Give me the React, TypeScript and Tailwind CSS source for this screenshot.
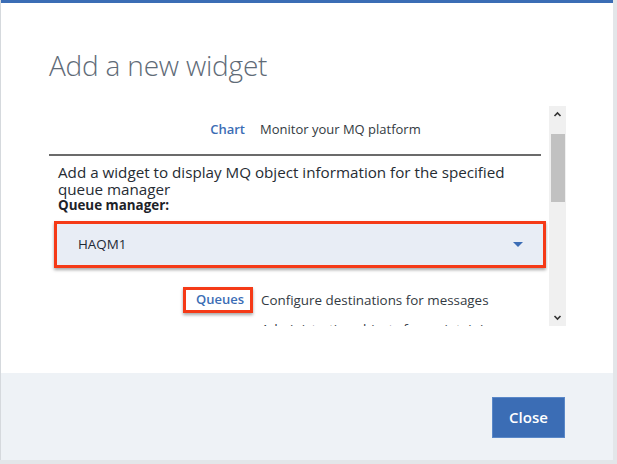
import React from "react";

const font = { fontFamily: '"Open Sans", "Liberation Sans", sans-serif' };

export default function App() {
  return (
    <div className="w-[617px] h-[464px] bg-[#e3e6e9] overflow-hidden" style={font}>
      <div className="w-[613px] h-[460px] flex flex-col bg-white border-l border-[#d5d9dd]">
        <div className="h-[3px] shrink-0 bg-[#3b6db5]" />
        <div className="h-[370px] shrink-0 flex flex-col pl-[48px]">
          <div className="pt-[42px] h-[103px] shrink-0 text-[28px] font-light text-[#5f6b77] leading-[40px] tracking-[-0.2px]">
            Add a new widget
          </div>
          <div className="flex h-[220px] shrink-0">
            <div className="w-[499px] h-[220px] overflow-hidden flex flex-col">
              <div className="flex items-center h-[48px] shrink-0 text-[13px]">
                <div className="w-[196px] text-right font-semibold text-[#3b6db5]">Chart</div>
                <div className="pl-[15px] text-[#333a42]">Monitor your MQ platform</div>
              </div>
              <div className="h-[2px] w-[492px] shrink-0 bg-[#6b6b6b]" />
              <div className="pl-[9px] pt-[8px] shrink-0 text-[15.2px] leading-[17px] text-[#262c33]">
                Add a widget to display MQ object information for the specified queue manager
              </div>
              <div className="pl-[9px] shrink-0 text-[13.4px] leading-[15px] font-bold text-[#1d2228]">Queue manager:</div>
              <div className="ml-[5px] mt-[8px] shrink-0 w-[492px] h-[47px] border-[3px] border-[#f53a17] shadow-[0_2px_3px_rgba(0,0,0,0.35)]">
                <div className="h-full bg-[#e8edf5] flex items-center justify-between pl-[21px] pr-[20px]">
                  <span className="text-[13.4px] text-[#1f2a36]">HAQM1</span>
                  <svg width="10" height="6" viewBox="0 0 10 6">
                    <path d="M0 0 L10 0 L5 5 Z" fill="#3b6db5" />
                  </svg>
                </div>
              </div>
              <div className="flex items-center mt-[19px] h-[26px] shrink-0">
                <div className="w-[134px]" />
                <div className="w-[70px] h-[26px] text-[13px] border-[3px] border-[#f53a17] shadow-[0_2px_3px_rgba(0,0,0,0.35)] flex items-center justify-end pr-[6px] font-semibold text-[#3b6db5] bg-white">
                  Queues
                </div>
                <div className="pl-[8px] text-[13.4px] text-[#333a42]">Configure destinations for messages</div>
              </div>
              <div className="flex mt-[6px] shrink-0 text-[13.4px] leading-[20px]">
                <div className="w-[212px]" />
                <div className="text-[#333a42]">Administrative objects for maintaining</div>
              </div>
            </div>
            <div className="ml-[1px] w-[17px] h-[220px] bg-[#f0f0f0] flex flex-col items-center">
              <div className="h-[17px] w-full flex items-center justify-center shrink-0">
                <svg width="9" height="9" viewBox="0 0 9 9">
                  <path d="M1.5 6 L4.5 3 L7.5 6" stroke="#333" strokeWidth="1.6" fill="none" />
                </svg>
              </div>
              <div className="mt-[11px] h-[68px] w-[14px] bg-[#c1c1c1] shrink-0" />
              <div className="flex-1" />
              <div className="h-[18px] w-full flex items-center justify-center shrink-0">
                <svg width="9" height="9" viewBox="0 0 9 9">
                  <path d="M1.5 3 L4.5 6 L7.5 3" stroke="#333" strokeWidth="1.6" fill="none" />
                </svg>
              </div>
            </div>
          </div>
        </div>
        <div className="flex-1 bg-[#eef2f6] flex items-start justify-end pt-[24px] pr-[48px]">
          <button className="w-[73px] h-[41px] bg-[#3b6db5] text-white text-[15px] font-semibold border border-[#5a88c8]">
            Close
          </button>
        </div>
      </div>
    </div>
  );
}
